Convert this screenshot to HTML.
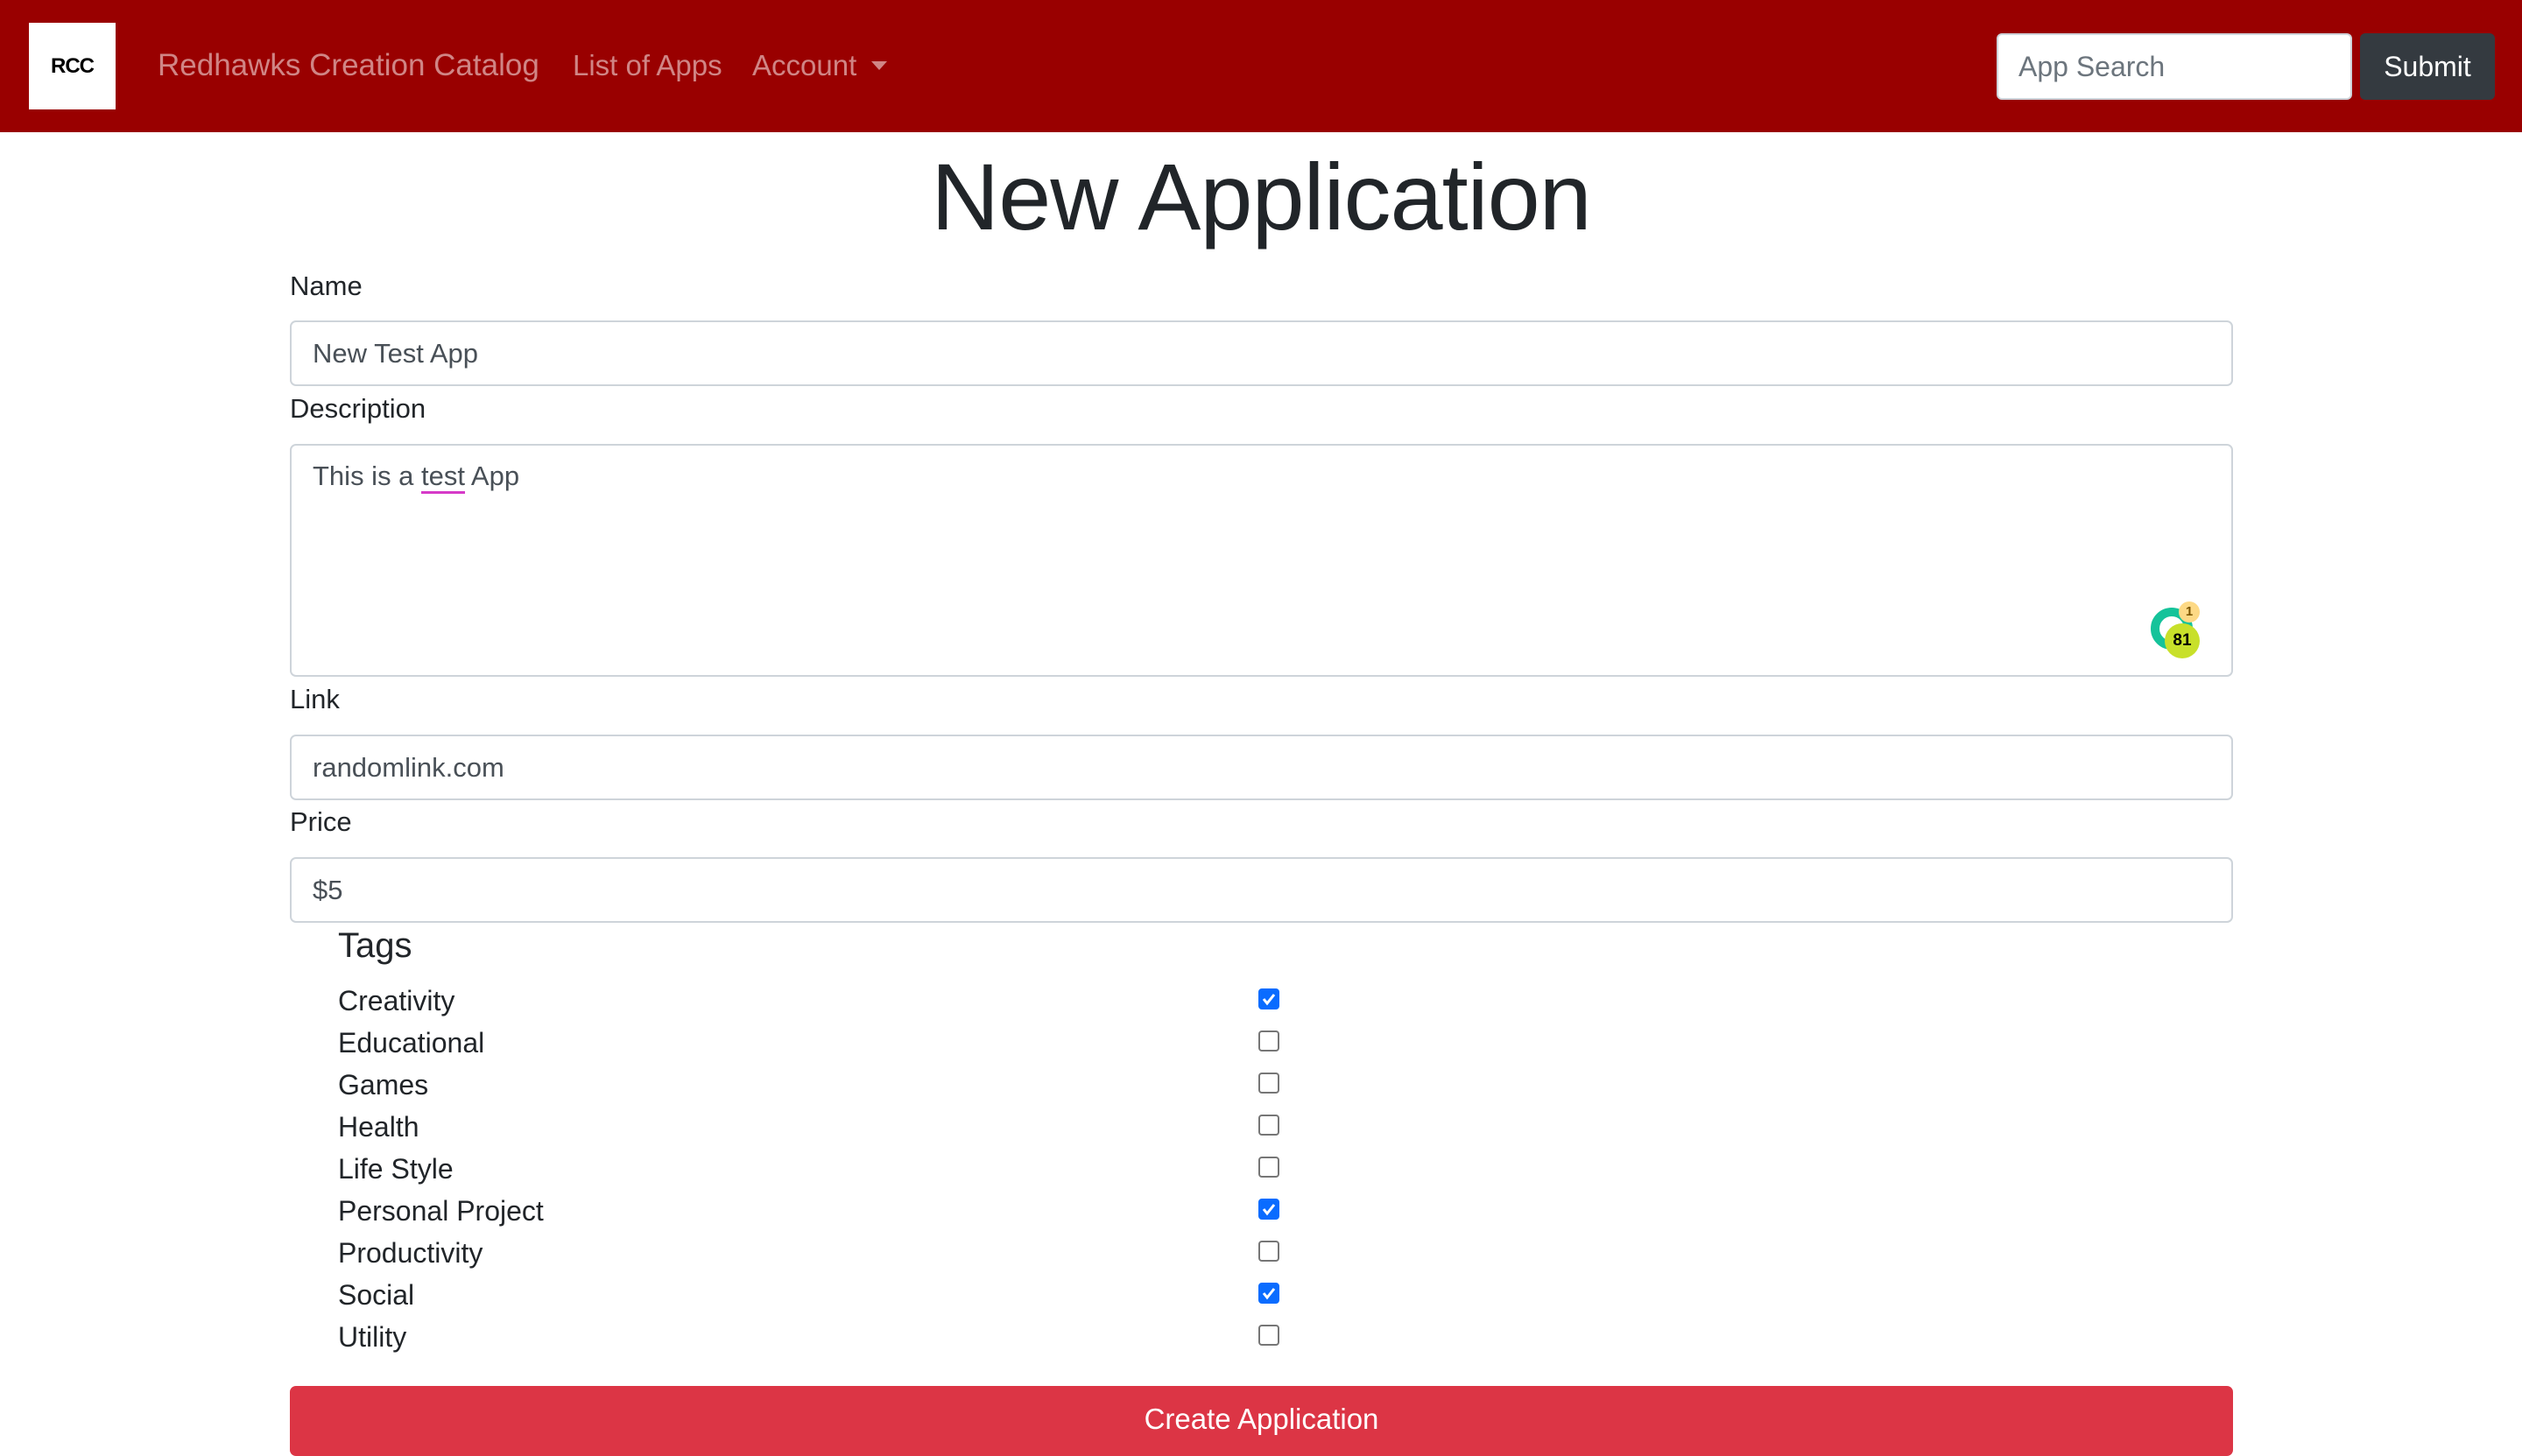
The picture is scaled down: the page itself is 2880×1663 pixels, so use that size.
<!DOCTYPE html>
<html><head><meta charset="utf-8"><style>
*{box-sizing:border-box;margin:0;padding:0}
body{width:2880px;height:1658px;overflow:hidden;background:#fff;font-family:"Liberation Sans",Arial,sans-serif;color:#212529;position:relative}
.a{position:absolute}
nav{position:absolute;left:0;top:0;width:2880px;height:151px;background:#990000}
.nl{position:absolute;color:#d08585;font-size:33px;top:55px;line-height:40px}
.lbl{position:absolute;left:331px;font-size:31px;line-height:36px}
.inp{position:absolute;left:331px;width:2219px;border:2px solid #ced4da;border-radius:7px;background:#fff;color:#495057;font-size:31px;padding-left:24px}
.tag{position:absolute;left:386px;font-size:32px;line-height:36px}
.cb{position:absolute;left:1437px;width:24px;height:24px;border:2px solid #767676;border-radius:4px;background:#fff}
.cb.on{background:#0a6cff;border-color:#0a6cff}
</style></head><body>
<nav>
<div class="a" style="left:33px;top:26px;width:99px;height:99px;background:#fff;font-weight:bold;font-size:24px;line-height:99px;text-align:center;color:#000;letter-spacing:-1px">RCC</div>
<div class="nl" style="left:180px;font-size:35px;top:55px">Redhawks Creation Catalog</div>
<div class="nl" style="left:654px">List of Apps</div>
<div class="nl" style="left:859px">Account</div>
<div class="a" style="left:995px;top:70px;width:0;height:0;border-left:9px solid transparent;border-right:9px solid transparent;border-top:10px solid #d08585"></div>
<div class="a" style="left:2280px;top:38px;width:406px;height:76px;background:#fff;border:2px solid #ced4da;border-radius:6px;color:#6c757d;font-size:32px;line-height:72px;padding-left:23px">App Search</div>
<div class="a" style="left:2695px;top:38px;width:154px;height:76px;background:#343a40;border-radius:6px;color:#fff;font-size:32px;line-height:76px;text-align:center">Submit</div>
</nav>
<div class="a" style="left:0;width:2880px;top:163px;text-align:center;font-size:108px;font-weight:300;line-height:124px;letter-spacing:-1px">New Application</div>
<div class="lbl" style="top:309px">Name</div>
<div class="inp" style="top:366px;height:75px;line-height:71px">New Test App</div>
<div class="lbl" style="top:449px">Description</div>
<div class="inp" style="top:507px;height:266px;padding-top:17px;line-height:36px">This is a <span style="border-bottom:3px solid #d63ac8">test</span> App</div>
<div class="a" style="left:2456px;top:694px;width:48px;height:48px;border-radius:50%;border:10px solid #15c39a"></div>
<div class="a" style="left:2472px;top:712px;width:40px;height:40px;border-radius:50%;background:#c8e02a;font-weight:bold;font-size:19px;line-height:40px;text-align:center;color:#000">81</div>
<div class="a" style="left:2488px;top:687px;width:24px;height:24px;border-radius:50%;background:#fdd985;font-weight:bold;font-size:15px;line-height:24px;text-align:center;color:#7a5400">1</div>
<div class="lbl" style="top:781px">Link</div>
<div class="inp" style="top:839px;height:75px;line-height:71px">randomlink.com</div>
<div class="lbl" style="top:921px">Price</div>
<div class="inp" style="top:979px;height:75px;line-height:71px">$5</div>
<div class="a" style="left:386px;top:1058px;font-size:40px;font-weight:500;line-height:44px">Tags</div>
<div class="tag" style="top:1125px">Creativity</div><div class="cb on" style="top:1129px"></div>
<div class="tag" style="top:1173px">Educational</div><div class="cb" style="top:1177px"></div>
<div class="tag" style="top:1221px">Games</div><div class="cb" style="top:1225px"></div>
<div class="tag" style="top:1269px">Health</div><div class="cb" style="top:1273px"></div>
<div class="tag" style="top:1317px">Life Style</div><div class="cb" style="top:1321px"></div>
<div class="tag" style="top:1365px">Personal Project</div><div class="cb on" style="top:1369px"></div>
<div class="tag" style="top:1413px">Productivity</div><div class="cb" style="top:1417px"></div>
<div class="tag" style="top:1461px">Social</div><div class="cb on" style="top:1465px"></div>
<div class="tag" style="top:1509px">Utility</div><div class="cb" style="top:1513px"></div>
<svg class="a" style="left:1437px;top:1129px" width="24" height="24"><path d="M6 12l4 5 8-10" stroke="#fff" stroke-width="3" fill="none"/></svg>
<svg class="a" style="left:1437px;top:1369px" width="24" height="24"><path d="M6 12l4 5 8-10" stroke="#fff" stroke-width="3" fill="none"/></svg>
<svg class="a" style="left:1437px;top:1465px" width="24" height="24"><path d="M6 12l4 5 8-10" stroke="#fff" stroke-width="3" fill="none"/></svg>
<div class="a" style="left:331px;top:1583px;width:2219px;height:80px;background:#dc3545;border-radius:7px;color:#fff;font-size:33px;line-height:76px;text-align:center">Create Application</div>
</body></html>
